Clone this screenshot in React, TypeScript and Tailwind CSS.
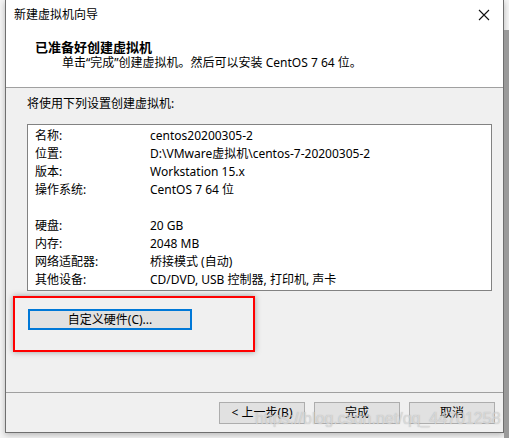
import React from "react";

const rows: [string, string][] = [
  ["名称:", "centos20200305-2"],
  ["位置:", "D:\\VMware虚拟机\\centos-7-20200305-2"],
  ["版本:", "Workstation 15.x"],
  ["操作系统:", "CentOS 7 64 位"],
  ["", ""],
  ["硬盘:", "20 GB"],
  ["内存:", "2048 MB"],
  ["网络适配器:", "桥接模式 (自动)"],
  ["其他设备:", "CD/DVD, USB 控制器, 打印机, 声卡"],
];

export default function App() {
  return (
    <div
      className="relative w-[509px] h-[438px] overflow-hidden bg-[#f4f4f4] text-[12px] text-[#000]"
      style={{ fontFamily: '"Noto Sans", "Noto Sans CJK SC", sans-serif' }}
    >
      <div className="absolute right-0 top-[30px] w-[5px] h-[408px] bg-[#9a9a9a]" />
      <div className="ml-[5px] w-[499px] h-[433px] flex flex-col border-l border-r border-b border-[#6f6f6f] bg-[#f0f0f0] shadow-[0_2px_6px_rgba(0,0,0,0.25)]">
        {/* title bar */}
        <div className="h-[30px] shrink-0 bg-white flex items-center justify-between pl-[8px] pr-[10px]">
          <span className="leading-[16px]">新建虚拟机向导</span>
          <svg width="12" height="12" viewBox="0 0 12 12" className="mr-[3px]">
            <path d="M1 1 L11 11 M11 1 L1 11" stroke="#111" strokeWidth="1.1" />
          </svg>
        </div>
        {/* header */}
        <div className="h-[58px] shrink-0 bg-white border-b border-[#a0a0a0] pt-[9px] pl-[29px]">
          <div className="font-bold text-[13px] leading-[16px]">已准备好创建虚拟机</div>
          <div className="leading-[16px] pl-[27px]">单击“完成”创建虚拟机。然后可以安装 CentOS 7 64 位。</div>
        </div>
        {/* body */}
        <div className="flex-1 flex flex-col pt-[8px]">
          <div className="pl-[21px] leading-[16px]">将使用下列设置创建虚拟机:</div>
          <div className="ml-[21px] mt-[12px] w-[465px] h-[167px] border border-[#828282] bg-white pt-[2px] pl-[7px]">
            {rows.map(([k, v], i) => (
              <div key={i} className="flex h-[18px] leading-[18px]">
                <span className="w-[115px] shrink-0">{k}</span>
                <span>{v}</span>
              </div>
            ))}
          </div>
          <div className="ml-[7px] mt-[5px] w-[242px] h-[56px] border-2 border-[#ff0000] shadow-[0_0_6px_rgba(0,0,0,0.35)] pt-[11px] pl-[13px]">
            <div className="w-[164px] h-[21px] border-2 border-[#0078d7] bg-[#e1e1e1] flex items-center justify-center leading-[16px]">
              自定义硬件(C)...
            </div>
          </div>
        </div>
        {/* footer */}
        <div className="h-[40px] shrink-0 border-t border-[#a0a0a0] pt-[9px] pr-[8px] flex justify-end gap-[9px]">
          <div className="w-[86px] h-[22px] border border-[#adadad] bg-[#e1e1e1] flex items-center justify-center leading-[16px]">
            &lt; 上一步(B)
          </div>
          <div className="w-[86px] h-[22px] border border-[#adadad] bg-[#e1e1e1] flex items-center justify-center leading-[16px]">
            完成
          </div>
          <div className="w-[86px] h-[22px] border border-[#adadad] bg-[#e1e1e1] flex items-center justify-center leading-[16px]">
            取消
          </div>
        </div>
      </div>
      <div
        className="absolute left-[255px] top-[409px] text-[16px] leading-[20px] text-[rgba(230,230,230,0.7)] [text-shadow:0_0_1px_rgba(120,120,120,0.5)] whitespace-nowrap pointer-events-none"
        style={{ fontFamily: '"Liberation Sans", Arial, sans-serif' }}
      >
        https://blog.csdn.net/qq_44701258
      </div>
    </div>
  );
}
